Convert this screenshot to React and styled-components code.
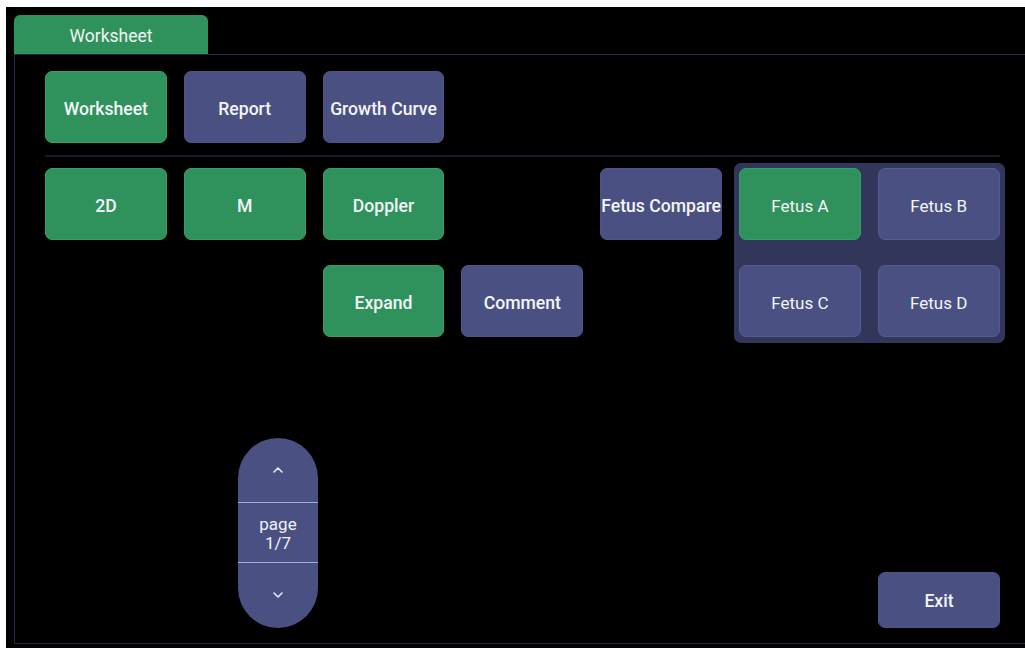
import React from "react";
import styled, { createGlobalStyle } from "styled-components";

const GlobalStyle = createGlobalStyle`
  html, body {
    margin: 0;
    background: #ffffff;
  }
  body {
    padding: 7px 0 0 6px;
    font-family: Roboto, "Noto Sans", sans-serif;
    overflow: hidden;
  }
`;

const GREEN = "#2f925d";
const NAVY = "#4b5082";

function Chevron({ up }) {
  return (
    <svg width="12" height="8" viewBox="0 0 12 8">
      <polyline
        points={up ? "2,6 6,2 10,6" : "2,2 6,6 10,2"}
        fill="none"
        stroke="#e8e9f5"
        strokeWidth="1.6"
        strokeLinecap="round"
        strokeLinejoin="round"
      />
    </svg>
  );
}

function App() {
  return (
    <>
      <GlobalStyle />
      <Screen>
        <Tab>Worksheet</Tab>
        <Panel>
          <ButtonGrid>
            <Btn $active>Worksheet</Btn>
            <Btn>Report</Btn>
            <Btn>Growth Curve</Btn>
          </ButtonGrid>
          <Separator />
          <ButtonGrid>
            <Btn $active>2D</Btn>
            <Btn $active>M</Btn>
            <Btn $active>Doppler</Btn>
            <Btn $col={5}>Fetus Compare</Btn>
            <FetusGroup>
              <Btn $active $light>Fetus A</Btn>
              <Btn $light>Fetus B</Btn>
              <Btn $light>Fetus C</Btn>
              <Btn $light>Fetus D</Btn>
            </FetusGroup>
            <Btn $active $col={3}>Expand</Btn>
            <Btn>Comment</Btn>
          </ButtonGrid>
          <Footer>
            <Pager>
              <PagerPart>
                <Chevron up />
              </PagerPart>
              <PagerLabel>
                page
                <br />
                1/7
              </PagerLabel>
              <PagerPart>
                <Chevron />
              </PagerPart>
            </Pager>
            <ExitBtn>Exit</ExitBtn>
          </Footer>
        </Panel>
      </Screen>
    </>
  );
}

const Screen = styled.div`
  width: 1019px;
  height: 642px;
  background: #000;
  padding: 8px 0 0 8px;
  box-sizing: border-box;
  display: flex;
  flex-direction: column;
`;

const Tab = styled.div`
  width: 194px;
  height: 39px;
  padding-top: 2px;
  box-sizing: border-box;
  background: ${GREEN};
  border-radius: 6px 6px 0 0;
  color: #f2f5f3;
  font-size: 17.5px;
  display: flex;
  align-items: center;
  justify-content: center;
`;

const Panel = styled.div`
  flex: 1;
  border-top: 1px solid #252845;
  border-left: 1px solid #252845;
  border-bottom: 1px solid #252845;
  margin-bottom: 5px;
  padding: 16px 0 0 30px;
  display: flex;
  flex-direction: column;
`;

const ButtonGrid = styled.div`
  display: grid;
  grid-template-columns: repeat(7, 121.8px);
  grid-auto-rows: 72px;
  column-gap: 17px;
  row-gap: 25px;
`;

const Btn = styled.div`
  grid-column: ${(p) => (p.$col ? `${p.$col}` : "auto")};
  background: ${(p) => (p.$active ? GREEN : NAVY)};
  border: 1px solid ${(p) => (p.$active ? "#34a066" : p.$light ? "#565b91" : "#4f5488")};
  box-sizing: border-box;
  border-radius: 7px;
  padding-top: 3px;
  color: #f4f5f8;
  font-size: ${(p) => (p.$light ? "17px" : "17.6px")};
  font-weight: ${(p) => (p.$light ? 400 : 500)};
  white-space: nowrap;
  display: flex;
  align-items: center;
  justify-content: center;
`;

const Separator = styled.div`
  width: 955px;
  height: 2px;
  background: #191a2e;
  margin: 12px 0 11px;
`;

const FetusGroup = styled.div`
  grid-column: 6 / 8;
  grid-row: 1 / 3;
  margin: -5px -5px -6px -5px;
  padding: 5px;
  background: #33365b;
  border-radius: 7px;
  display: grid;
  grid-template-columns: 121.8px 121.8px;
  grid-auto-rows: 72px;
  column-gap: 17px;
  row-gap: 25px;
`;

const Footer = styled.div`
  display: flex;
  align-items: flex-end;
  justify-content: space-between;
  width: 955px;
  margin-top: 101px;
  padding-left: 193px;
  box-sizing: border-box;
`;

const Pager = styled.div`
  width: 80px;
  height: 190px;
  border-radius: 40px;
  background: ${NAVY};
  display: flex;
  flex-direction: column;
  overflow: hidden;
`;

const PagerPart = styled.div`
  height: 64px;
  display: flex;
  align-items: center;
  justify-content: center;
`;

const PagerLabel = styled.div`
  height: 61px;
  padding-top: 2px;
  box-sizing: border-box;
  border-top: 1px solid #a3a8e6;
  border-bottom: 1px solid #a3a8e6;
  color: #f0f1f7;
  font-size: 17px;
  line-height: 19px;
  text-align: center;
  display: flex;
  align-items: center;
  justify-content: center;
`;

const ExitBtn = styled(Btn)`
  width: 122px;
  height: 56px;
  padding-top: 2px;
`;

export default App;
